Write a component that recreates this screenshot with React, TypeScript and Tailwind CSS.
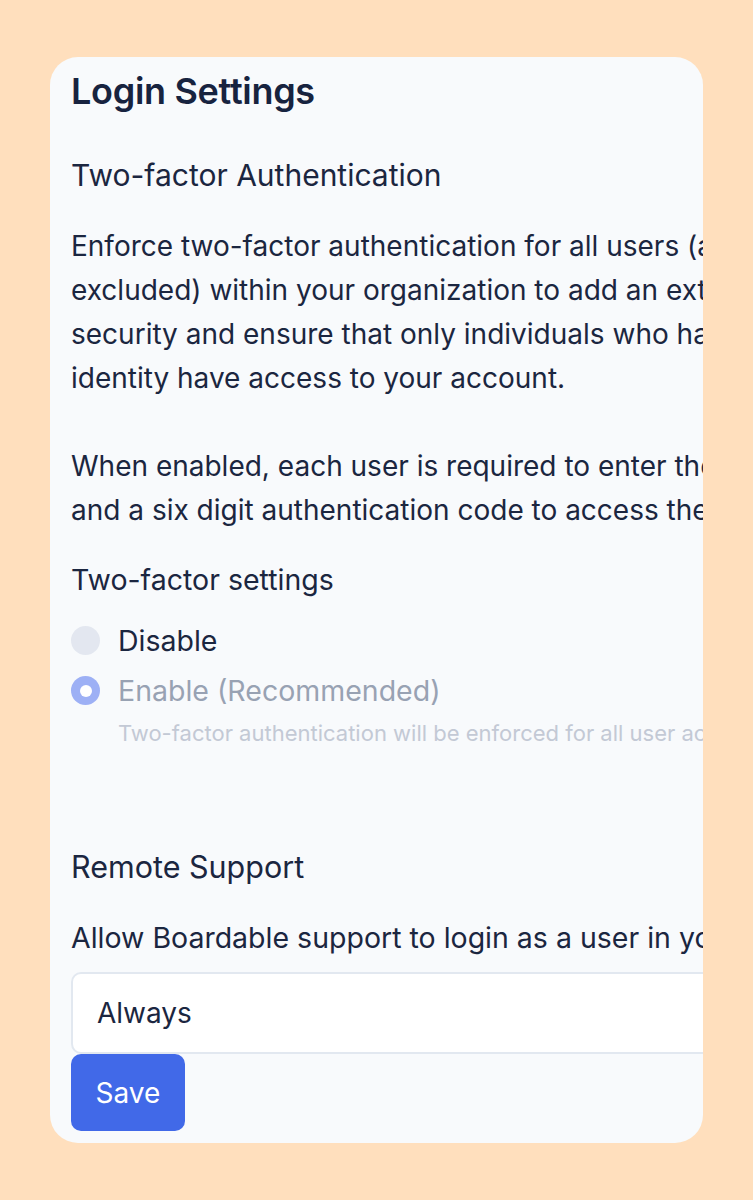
import React from 'react';

const font = { fontFamily: 'Inter, "Noto Sans", sans-serif' };

const RadioOption: React.FC<{ label: string; checked?: boolean; hint?: string }> = ({ label, checked = false, hint }) => {
  return (
    <div className="flex items-start gap-[18px]">
      {checked ? (
        <span className="mt-[7px] flex h-[29px] w-[29px] shrink-0 items-center justify-center rounded-full bg-[#9db0f5]">
          <span className="h-[12px] w-[12px] rounded-full bg-white" />
        </span>
      ) : (
        <span className="mt-[7px] h-[29px] w-[29px] shrink-0 rounded-full bg-[#e3e7f0]" />
      )}
      <div>
        <div className={`text-[28.5px] leading-[44px] ${checked ? 'text-[#98a2b3]' : 'text-[#1b2640]'}`}>{label}</div>
        {hint && <div className="mt-[5px] text-[22px] leading-[30px] text-[#c3c9d5]">{hint}</div>}
      </div>
    </div>
  );
};

export default function App() {
  return (
    <div className="min-h-screen bg-[#ffdfbd] pt-[57px] pl-[50px]" style={font}>
      <div className="h-[1086px] w-[653px] overflow-hidden rounded-[28px] bg-[#f8fafc]">
        <div className="w-[1000px] pl-[21px] pt-[12px] text-[#1b2640]">
          <h1 className="text-[36px] font-semibold leading-[44px] tracking-[-0.3px] text-[#17233f]">Login Settings</h1>

          <h2 className="mt-[40px] text-[30px] leading-[44px]">Two-factor Authentication</h2>

          <p className="mt-[27px] whitespace-nowrap text-[28px] leading-[44px]">
            Enforce two-factor authentication for all users (admins
            <br />
            excluded) within your organization to add an extra layer of
            <br />
            security and ensure that only individuals who have verified their
            <br />
            identity have access to your account.
          </p>

          <p className="mt-[44px] whitespace-nowrap text-[28px] leading-[44px]">
            When enabled, each user is required to enter their password
            <br />
            and a six digit authentication code to access their account.
          </p>

          <h3 className="mt-[26px] text-[28.5px] leading-[44px]">Two-factor settings</h3>

          <div className="mt-[17px] flex flex-col gap-[6px]">
            <RadioOption label="Disable" />
            <RadioOption
              label="Enable (Recommended)"
              checked
              hint="Two-factor authentication will be enforced for all user accounts."
            />
          </div>

          <h2 className="mt-[97px] text-[30.5px] leading-[44px]">Remote Support</h2>

          <p className="mt-[27px] whitespace-nowrap text-[28.5px] leading-[44px]">
            Allow Boardable support to login as a user in your organization.
          </p>

          <div className="mt-[12px] flex h-[82px] w-[900px] items-center rounded-[10px] border-2 border-[#e2e8f0] bg-white pl-[24px] text-[28px] text-[#1b2640]">
            Always
          </div>

          <button className="flex h-[77px] w-[114px] items-center justify-center rounded-[10px] bg-[#4169e8] text-[28px] text-white">
            Save
          </button>
        </div>
      </div>
    </div>
  );
}
